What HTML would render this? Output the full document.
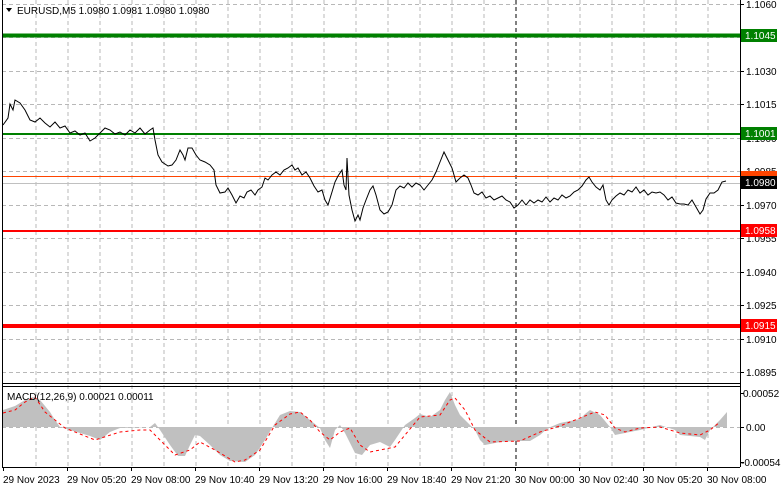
<!DOCTYPE html>
<html><head><meta charset="utf-8"><style>
html,body{margin:0;padding:0;background:#fff;width:781px;height:489px;overflow:hidden}
svg text{font-family:"Liberation Sans",sans-serif;font-size:10px;fill:#000}
</style></head><body>
<svg width="781" height="489" xmlns="http://www.w3.org/2000/svg">
<rect width="781" height="489" fill="#fff"/>
<g stroke="#b8b8b8" stroke-dasharray="4,3" stroke-width="1">
<path d="M36 0V467M68 0V467M100 0V467M132 0V467M164 0V467M196 0V467M228 0V467M260 0V467M292 0V467M324 0V467M356 0V467M388 0V467M420 0V467M452 0V467M484 0V467M548 0V467M580 0V467M612 0V467M644 0V467M676 0V467M708 0V467"/>
<path d="M2 4.5H740M2 37.5H740M2 71.5H740M2 104.5H740M2 138.5H740M2 171.5H740M2 205.5H740M2 238.5H740M2 272.5H740M2 305.5H740M2 339.5H740M2 372.5H740M2 427.5H740"/>
</g>
<path d="M516 0V467" stroke="#000" stroke-dasharray="4,3"/>
<line x1="2" y1="35.5" x2="740" y2="35.5" stroke="#008000" stroke-width="4"/>
<line x1="2" y1="134" x2="740" y2="134" stroke="#008000" stroke-width="2"/>
<line x1="2" y1="183.5" x2="740" y2="183.5" stroke="#c0c0c0" stroke-width="1"/>
<line x1="2" y1="176.5" x2="740" y2="176.5" stroke="#ff4500" stroke-width="1"/>
<line x1="2" y1="231" x2="740" y2="231" stroke="#ff0000" stroke-width="2"/>
<line x1="2" y1="326" x2="740" y2="326" stroke="#ff0000" stroke-width="4"/>
<polyline fill="none" stroke="#000" stroke-width="1" points="3,125 8,118 10,104 13,110 15,100 20,103 25,110 30,120 35,122 40,118 45,123 50,127 55,122 60,128 65,126 70,133 75,131 80,135 85,133 90,141 95,138 100,133 105,128 110,130 115,134 120,132 125,135 130,130 135,133 140,128 145,134 150,130 153,128 155,140 158,155 162,162 168,166 172,165 176,160 180,150 183,155 185,160 188,148 192,148 196,155 200,160 205,162 210,165 214,170 216,185 220,193 225,192 228,188 232,195 236,203 240,196 244,198 247,192 251,190 255,195 258,190 262,187 265,178 268,180 272,175 276,172 280,175 284,170 288,168 292,165 295,170 298,168 302,175 306,172 310,178 314,186 318,192 322,190 325,200 328,205 332,192 335,182 338,176 342,170 344,185 346,190 347,158 349,195 352,210 355,221 358,215 360,220 363,208 366,200 370,190 373,186 376,195 380,210 384,214 388,212 392,205 396,190 400,186 404,188 408,183 412,187 416,183 420,185 424,190 428,185 432,180 436,172 440,162 444,152 448,160 452,168 456,182 460,178 464,175 468,178 471,185 474,193 478,195 482,192 486,198 490,196 494,200 498,198 502,196 506,200 510,202 514,208 518,205 522,200 526,205 530,200 534,203 538,200 542,202 546,197 550,202 554,198 558,200 562,195 566,198 570,196 574,192 578,190 582,186 586,180 589,177 592,182 596,187 600,190 603,185 606,200 609,205 612,200 616,196 620,193 624,195 628,190 632,192 636,187 640,193 644,190 648,195 652,192 656,193 660,192 664,195 668,200 672,197 676,203 680,204 684,204 688,205 692,200 696,207 700,214 703,210 706,199 710,193 714,193 718,190 722,182 726,181"/>
<line x1="2" y1="383.5" x2="740" y2="383.5" stroke="#000"/>
<line x1="2" y1="386.5" x2="740" y2="386.5" stroke="#000"/>
<line x1="2" y1="467.5" x2="740" y2="467.5" stroke="#000"/>
<line x1="2.5" y1="0" x2="2.5" y2="467" stroke="#000"/>
<line x1="740.5" y1="0" x2="740.5" y2="467" stroke="#000"/>
<polygon fill="#c0c0c0" points="3,427 3,410 15,406 25,400 33,397 40,400 50,412 55,420 60,427 70,430 90,436 100,440 110,432 120,428 150,427 155,423 160,430 170,445 178,456 185,456 190,445 195,435 200,436 210,445 220,455 230,461 245,462 255,455 265,440 272,428 280,415 290,411 300,412 310,420 320,428 325,440 330,448 335,430 340,425 345,433 355,453 362,455 370,445 380,442 390,447 395,440 405,425 415,418 420,414 430,417 440,410 445,400 450,392 455,405 460,415 470,425 475,430 480,440 485,445 500,442 515,441 530,441 540,435 548,428 560,423 580,419 585,414 590,410 600,415 610,427 615,435 640,430 660,425 675,430 680,435 700,437 705,440 710,430 720,420 727,412 727,427"/>
<polyline fill="none" stroke="#ff0000" stroke-dasharray="3,3" points="3,413 15,410 25,402 35,397 45,412 55,420 65,428 80,434 95,440 120,432 140,430 150,430 160,440 175,455 190,450 200,442 215,450 235,462 245,460 260,450 275,425 290,414 300,412 310,420 320,432 330,440 340,432 350,428 360,445 370,452 380,450 395,447 405,435 420,417 440,415 450,400 455,398 465,410 475,430 490,442 520,441 540,432 560,426 580,418 595,412 605,415 615,428 625,432 640,428 660,427 680,433 700,435 710,430 720,422"/>
<g stroke="#000"><path d="M740 4.5h4M740 37.5h4M740 71.5h4M740 104.5h4M740 138.5h4M740 171.5h4M740 205.5h4M740 238.5h4M740 272.5h4M740 305.5h4M740 339.5h4M740 372.5h4M740 393.5h4M740 427.5h4M740 462.5h4"/>
<path d="M3.5 467v4M67.5 467v4M131.5 467v4M195.5 467v4M259.5 467v4M323.5 467v4M387.5 467v4M451.5 467v4M515.5 467v4M579.5 467v4M643.5 467v4M707.5 467v4"/></g>
<g>
<text x="746" y="8">1.1060</text>
<text x="746" y="75">1.1030</text>
<text x="746" y="108">1.1015</text>
<text x="746" y="142">1.1000</text>
<text x="746" y="175">1.0985</text>
<text x="746" y="209">1.0970</text>
<text x="746" y="242">1.0955</text>
<text x="746" y="276">1.0940</text>
<text x="746" y="309">1.0925</text>
<text x="746" y="343">1.0910</text>
<text x="746" y="376">1.0895</text>
<text x="743" y="397">0.00052</text>
<text x="746" y="431">0.00</text>
<text x="741" y="466">-0.00054</text>
</g>
<rect x="741" y="29" width="36" height="13" fill="#008000"/><text x="745" y="39" style="fill:#fff">1.1045</text>
<rect x="741" y="127" width="36" height="13" fill="#008000"/><text x="745" y="137" style="fill:#fff">1.1001</text>
<rect x="741" y="171" width="36" height="7" fill="#ff4500"/>
<rect x="741" y="176" width="36" height="13" fill="#000"/><text x="745" y="186" style="fill:#fff">1.0980</text>
<rect x="741" y="224" width="36" height="13" fill="#ff0000"/><text x="745" y="234" style="fill:#fff">1.0958</text>
<rect x="741" y="319" width="36" height="13" fill="#ff0000"/><text x="745" y="329" style="fill:#fff">1.0915</text>
<polygon points="6,8 12,8 9,12" fill="#000"/>
<text x="17" y="14">EURUSD,M5  1.0980 1.0981 1.0980 1.0980</text>
<text x="7" y="400">MACD(12,26,9) 0.00021 0.00011</text>
<g>
<text x="3" y="483">29 Nov 2023</text>
<text x="67" y="483">29 Nov 05:20</text>
<text x="131" y="483">29 Nov 08:00</text>
<text x="195" y="483">29 Nov 10:40</text>
<text x="259" y="483">29 Nov 13:20</text>
<text x="323" y="483">29 Nov 16:00</text>
<text x="387" y="483">29 Nov 18:40</text>
<text x="451" y="483">29 Nov 21:20</text>
<text x="515" y="483">30 Nov 00:00</text>
<text x="579" y="483">30 Nov 02:40</text>
<text x="643" y="483">30 Nov 05:20</text>
<text x="707" y="483">30 Nov 08:00</text>
</g>
</svg>
</body></html>
